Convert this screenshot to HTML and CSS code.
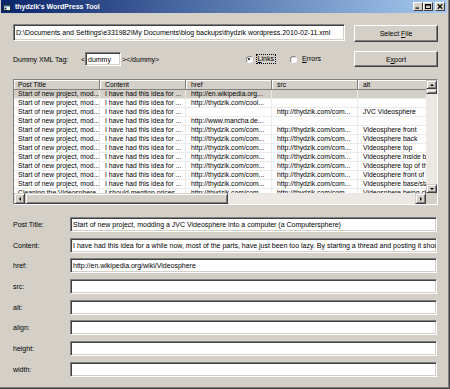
FILE: index.html
```html
<!DOCTYPE html>
<html lang="en">
<head>
<meta charset="UTF-8">
<title>thydzik's WordPress Tool</title>
<link rel="stylesheet" href="styles.css">
</head>
<body>
<div class="window">
  <div class="titlebar">
    <svg class="app-icon" width="8" height="8" viewBox="0 0 8 8">
      <rect x="0.5" y="1.5" width="7" height="6" fill="#fff" stroke="#1a2a3a"/>
      <rect x="1" y="2" width="6" height="1.5" fill="#2a6a8a"/>
      <rect x="1.5" y="4.5" width="2" height="2" fill="#1a2a3a"/>
    </svg>
    <span class="title">thydzik's WordPress Tool</span>
    <div class="caption-btns">
      <span class="cap-btn">
        <svg width="6" height="5" viewBox="0 0 6 5"><rect x="0.5" y="3.5" width="3.5" height="1.2" fill="#000"/></svg>
      </span>
      <span class="cap-btn">
        <svg width="6" height="5" viewBox="0 0 6 5"><rect x="0.5" y="0.5" width="5" height="4" fill="none" stroke="#000"/><rect x="0" y="0" width="6" height="1.6" fill="#000"/></svg>
      </span>
      <span class="cap-btn close">
        <svg width="6" height="5" viewBox="0 0 6 5"><path d="M0.8 0.3 L5.2 4.7 M5.2 0.3 L0.8 4.7" stroke="#000" stroke-width="1.2"/></svg>
      </span>
    </div>
  </div>

  <div class="client">
    <div class="row row-file">
      <div class="textbox path">D:\Documents and Settings\e331982\My Documents\blog backups\thydzik wordpress.2010-02-11.xml</div>
      <div class="btn btn-select"><span>Select <u>F</u>ile</span></div>
    </div>

    <div class="row row-tag">
      <div class="tag-left">
        <span class="tag-label">Dummy XML Tag:</span>
        <span class="lt">&lt;</span>
        <div class="textbox tag">dummy</div>
        <span class="gt">&gt;&lt;/dummy&gt;</span>
        <div class="radios">
          <span class="radio checked"></span>
          <span class="radio-text focus"><u>L</u>inks</span>
          <span class="radio second"></span>
          <span class="radio-text"><u>E</u>rrors</span>
        </div>
      </div>
      <div class="btn btn-export"><span>E<u>x</u>port</span></div>
    </div>

    <div class="list">
      <div class="list-main">
        <div class="grid">
          <div class="grid-row header">
            <div class="cell">Post Title</div>
            <div class="cell">Content</div>
            <div class="cell">href</div>
            <div class="cell">src</div>
            <div class="cell wide">alt</div>
          </div>
          <div class="grid-row selected">
            <div class="cell">Start of new project, mod...</div>
            <div class="cell">I have had this idea for ...</div>
            <div class="cell">http://en.wikipedia.org...</div>
            <div class="cell"></div>
            <div class="cell wide"></div>
          </div>
          <div class="grid-row">
            <div class="cell">Start of new project, mod...</div>
            <div class="cell">I have had this idea for ...</div>
            <div class="cell">http://thydzik.com/cool...</div>
            <div class="cell"></div>
            <div class="cell wide"></div>
          </div>
          <div class="grid-row">
            <div class="cell">Start of new project, mod...</div>
            <div class="cell">I have had this idea for ...</div>
            <div class="cell"></div>
            <div class="cell">http://thydzik.com/com...</div>
            <div class="cell wide">JVC Videosphere</div>
          </div>
          <div class="grid-row">
            <div class="cell">Start of new project, mod...</div>
            <div class="cell">I have had this idea for ...</div>
            <div class="cell">http://www.mancha.de...</div>
            <div class="cell"></div>
            <div class="cell wide"></div>
          </div>
          <div class="grid-row">
            <div class="cell">Start of new project, mod...</div>
            <div class="cell">I have had this idea for ...</div>
            <div class="cell">http://thydzik.com/com...</div>
            <div class="cell">http://thydzik.com/com...</div>
            <div class="cell wide">Videosphere front</div>
          </div>
          <div class="grid-row">
            <div class="cell">Start of new project, mod...</div>
            <div class="cell">I have had this idea for ...</div>
            <div class="cell">http://thydzik.com/com...</div>
            <div class="cell">http://thydzik.com/com...</div>
            <div class="cell wide">Videosphere back</div>
          </div>
          <div class="grid-row">
            <div class="cell">Start of new project, mod...</div>
            <div class="cell">I have had this idea for ...</div>
            <div class="cell">http://thydzik.com/com...</div>
            <div class="cell">http://thydzik.com/com...</div>
            <div class="cell wide">Videosphere top</div>
          </div>
          <div class="grid-row">
            <div class="cell">Start of new project, mod...</div>
            <div class="cell">I have had this idea for ...</div>
            <div class="cell">http://thydzik.com/com...</div>
            <div class="cell">http://thydzik.com/com...</div>
            <div class="cell wide">Videosphere inside back</div>
          </div>
          <div class="grid-row">
            <div class="cell">Start of new project, mod...</div>
            <div class="cell">I have had this idea for ...</div>
            <div class="cell">http://thydzik.com/com...</div>
            <div class="cell">http://thydzik.com/com...</div>
            <div class="cell wide">Videosphere top of the case</div>
          </div>
          <div class="grid-row">
            <div class="cell">Start of new project, mod...</div>
            <div class="cell">I have had this idea for ...</div>
            <div class="cell">http://thydzik.com/com...</div>
            <div class="cell">http://thydzik.com/com...</div>
            <div class="cell wide">Videosphere front of the case</div>
          </div>
          <div class="grid-row">
            <div class="cell">Start of new project, mod...</div>
            <div class="cell">I have had this idea for ...</div>
            <div class="cell">http://thydzik.com/com...</div>
            <div class="cell">http://thydzik.com/com...</div>
            <div class="cell wide">Videosphere base/stand</div>
          </div>
          <div class="grid-row">
            <div class="cell">Cleaning the Videosphere</div>
            <div class="cell">I should mention prices...</div>
            <div class="cell">http://thydzik.com/com...</div>
            <div class="cell">http://thydzik.com/com...</div>
            <div class="cell wide">Videosphere being cleaned</div>
          </div>
        </div>
        <div class="vscroll">
          <div class="sb-btn"><span class="arrow up"></span></div>
          <div class="sb-thumb v"></div>
          <div class="sb-track"></div>
          <div class="sb-btn"><span class="arrow down"></span></div>
        </div>
      </div>
      <div class="list-bottom">
        <div class="hscroll">
          <div class="sb-btn h"><span class="arrow left"></span></div>
          <div class="sb-thumb h"></div>
          <div class="sb-track"></div>
          <div class="sb-btn h"><span class="arrow right"></span></div>
        </div>
        <div class="corner"></div>
      </div>
    </div>

    <div class="fields">
      <span class="field-label">Post Title:</span>
      <div class="textbox field">Start of new project, modding a JVC Videosphere into a computer (a Computersphere)</div>
      <span class="field-label">Content:</span>
      <div class="textbox field">I have had this idea for a while now, most of the parts, have just been too lazy. By starting a thread and posting it should get me motivated.</div>
      <span class="field-label">href:</span>
      <div class="textbox field">http://en.wikipedia.org/wiki/Videosphere</div>
      <span class="field-label">src:</span>
      <div class="textbox field"></div>
      <span class="field-label">alt:</span>
      <div class="textbox field"></div>
      <span class="field-label">align:</span>
      <div class="textbox field"></div>
      <span class="field-label">height:</span>
      <div class="textbox field"></div>
      <span class="field-label">width:</span>
      <div class="textbox field"></div>
    </div>
  </div>
</div>
</body>
</html>
```

FILE: styles.css
```css
body {
  margin: 0;
  font-family: "Liberation Sans", Arial, sans-serif;
  font-size: 7px;
  color: #000;
}
.window {
  width: 450px;
  height: 389px;
  box-sizing: border-box;
  background: #d4d0c8;
  padding: 0 2px 2px 1px;
  border-right: 1px solid #404040;
  border-bottom: 1px solid #404040;
  box-shadow: inset -1px -1px #808080;
  overflow: hidden;
}
/* title bar */
.titlebar {
  height: 13px;
  display: flex;
  align-items: center;
  padding: 0 2px;
  background: linear-gradient(to right, #0a246a, #a6caf0);
}
.app-icon {
  margin-right: 4px;
}
.title {
  flex: 1;
  color: #fff;
  font-weight: bold;
  font-size: 7px;
}
.caption-btns {
  display: flex;
}
.cap-btn {
  width: 10px;
  height: 9px;
  box-sizing: border-box;
  background: #d4d0c8;
  border: 1px solid;
  border-color: #fff #404040 #404040 #fff;
  display: flex;
  align-items: center;
  justify-content: center;
}
.cap-btn.close {
  margin-left: 2px;
}
/* client area */
.client {
  padding-left: 12px;
}
.row {
  display: flex;
}
.row-file {
  margin-top: 11px;
  align-items: flex-start;
}
.row-tag {
  margin-top: 9px;
  height: 16px;
  align-items: center;
}
.textbox {
  box-sizing: border-box;
  background: #fff;
  border: 1px solid;
  border-color: #808080 #fff #fff #808080;
  box-shadow: inset 1px 1px #404040, inset -1px -1px #d4d0c8;
  padding-left: 2px;
  display: flex;
  align-items: center;
  white-space: nowrap;
  overflow: hidden;
}
.path {
  width: 332px;
  height: 17px;
}
.btn {
  box-sizing: border-box;
  width: 84px;
  margin-left: 9px;
  background: #d4d0c8;
  border: 1px solid;
  border-color: #fff #404040 #404040 #fff;
  box-shadow: inset -1px -1px #808080;
  display: flex;
  align-items: center;
  justify-content: center;
}
.btn-select {
  height: 17px;
  margin-top: 1px;
}
.btn-export {
  height: 16px;
}
.tag-left {
  width: 332px;
  display: flex;
  align-items: center;
}
.tag-label {
  width: 68px;
}
.lt {
  width: 4px;
}
.tag {
  width: 36px;
  height: 14px;
}
.gt {
  margin-left: 1px;
}
.radios {
  margin-left: auto;
  margin-right: 22px;
  display: flex;
  align-items: center;
}
.radio {
  width: 7px;
  height: 7px;
  box-sizing: border-box;
  border-radius: 50%;
  background: #fff;
  border: 1px solid;
  border-color: #808080 #fff #fff #808080;
  box-shadow: 0 0 0 0.5px #d4d0c8;
  display: flex;
  align-items: center;
  justify-content: center;
}
.radio.checked::after {
  content: "";
  width: 2px;
  height: 2px;
  border-radius: 50%;
  background: #000;
}
.radio.second {
  margin-left: 14px;
}
.radio-text {
  margin-left: 3px;
  padding: 0 1px;
  line-height: 8px;
  border: 1px dotted transparent;
}
.radio-text.focus {
  border-color: #000;
}
/* list view */
.list {
  margin-top: 12px;
  width: 425px;
  height: 126px;
  box-sizing: border-box;
  border: 1px solid;
  border-color: #808080 #fff #fff #808080;
  background: #fff;
  display: flex;
  flex-direction: column;
}
.list-main {
  display: flex;
  height: 113px;
}
.grid {
  flex: 1;
  overflow: hidden;
  font-size: 6.8px;
}
.grid-row {
  display: flex;
  height: 9px;
  line-height: 8px;
  box-sizing: border-box;
  border-bottom: 1px solid #ebebeb;
  white-space: nowrap;
}
.cell {
  flex: none;
  width: 86px;
  box-sizing: border-box;
  padding-left: 5px;
  border-right: 1px solid #ebebeb;
  overflow: hidden;
}
.cell:first-child {
  padding-left: 4px;
}
.cell.wide {
  width: 110px;
}
.grid-row.header {
  height: 10px;
  line-height: 9px;
  background: #d4d0c8;
  border-bottom: 1px solid #808080;
}
.header .cell {
  border-right: 1px solid #808080;
  box-shadow: inset 1px 1px #fff;
}
.grid-row.selected {
  background: #d4d0c8;
}
/* scrollbars */
.vscroll {
  width: 11px;
  display: flex;
  flex-direction: column;
}
.sb-btn {
  flex: none;
  width: 11px;
  height: 9px;
  box-sizing: border-box;
  background: #d4d0c8;
  border: 1px solid;
  border-color: #d4d0c8 #404040 #404040 #d4d0c8;
  box-shadow: inset 1px 1px #fff, inset -1px -1px #808080;
  display: flex;
  align-items: center;
  justify-content: center;
}
.sb-btn.h {
  width: 11px;
  height: 11px;
}
.sb-thumb {
  flex: none;
  box-sizing: border-box;
  background: #d4d0c8;
  border: 1px solid;
  border-color: #d4d0c8 #404040 #404040 #d4d0c8;
  box-shadow: inset 1px 1px #fff, inset -1px -1px #808080;
}
.sb-thumb.v {
  height: 5px;
}
.sb-thumb.h {
  width: 203px;
}
.sb-track {
  flex: 1;
  background: #ece9e4;
}
.arrow {
  width: 0;
  height: 0;
  border: 2px solid transparent;
}
.arrow.up {
  border-bottom-color: #000;
  margin-top: -2px;
}
.arrow.down {
  border-top-color: #000;
  margin-bottom: -2px;
}
.arrow.left {
  border-right-color: #000;
  margin-left: -2px;
}
.arrow.right {
  border-left-color: #000;
  margin-right: -2px;
}
.list-bottom {
  display: flex;
  height: 11px;
}
.hscroll {
  flex: 1;
  display: flex;
}
.corner {
  width: 11px;
  background: #d4d0c8;
}
/* detail fields */
.fields {
  margin-top: 12px;
  display: grid;
  grid-template-columns: 57px 367px;
  grid-auto-rows: 15px;
  row-gap: 5.7px;
  align-items: center;
}
.field {
  height: 15px;
}
```
